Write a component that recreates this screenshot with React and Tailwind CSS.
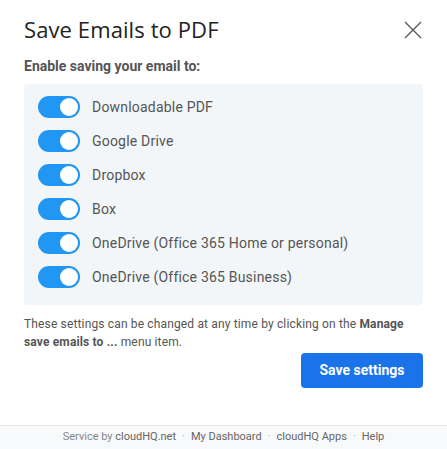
import React from 'react';

const options = [
  'Downloadable PDF',
  'Google Drive',
  'Dropbox',
  'Box',
  'OneDrive (Office 365 Home or personal)',
  'OneDrive (Office 365 Business)',
];

function Toggle() {
  return (
    <div className="w-[42px] h-[22px] rounded-full bg-[#2196f3] flex items-center justify-end px-[2px] shrink-0">
      <div className="w-[18px] h-[18px] rounded-full bg-white" />
    </div>
  );
}

function App() {
  return (
    <div className="w-[447px] h-[449px] bg-white flex flex-col font-['Roboto',sans-serif] overflow-hidden">
      <div className="flex-1 px-6">
        <div className="flex items-center justify-between pt-[11px] h-[48px]">
          <h1 className="text-[22px] text-[#222] font-normal tracking-[0.1px] font-['Open_Sans','Roboto',sans-serif]">Save Emails to PDF</h1>
          <svg width="18" height="18" viewBox="0 0 18 18" className="mr-[1px]">
            <path d="M1 1 L17 17 M17 1 L1 17" stroke="#555" strokeWidth="1.3" fill="none" />
          </svg>
        </div>
        <p className="mt-[8px] text-[14px] font-bold text-[#555] leading-[20px]">Enable saving your email to:</p>
        <div className="mt-[8px] bg-[#f2f6f8] rounded-[4px] px-[14px] pt-[12px] pb-[17px] flex flex-col gap-[12px]">
          {options.map((o) => (
            <div key={o} className="flex items-center gap-3">
              <Toggle />
              <span className="text-[14px] text-[#555] leading-[22px] tracking-[0.2px]">{o}</span>
            </div>
          ))}
        </div>
        <p className="mt-[10px] text-[12px] text-[#555] leading-[18px] tracking-[0.15px]">
          These settings can be changed at any time by clicking on the <b>Manage</b>
          <br />
          <b>save emails to ...</b> menu item.
        </p>
        <div className="flex justify-end mt-[2px]">
          <button className="w-[122px] h-[35px] rounded-[4px] bg-[#1a73e8] text-white text-[14px] font-bold">Save settings</button>
        </div>
      </div>
      <div className="h-[24px] border-t border-[#e6e6e6] bg-[#f8f9fa] flex items-center justify-center text-[11px] text-[#666]">
        <span className="text-[#888]">Service by&nbsp;</span>
        <span>cloudHQ.net</span>
        <span className="mx-[6px] text-[#aaa]">·</span>
        <span>My Dashboard</span>
        <span className="mx-[6px] text-[#aaa]">·</span>
        <span>cloudHQ Apps</span>
        <span className="mx-[6px] text-[#aaa]">·</span>
        <span>Help</span>
      </div>
    </div>
  );
}

export default App;
